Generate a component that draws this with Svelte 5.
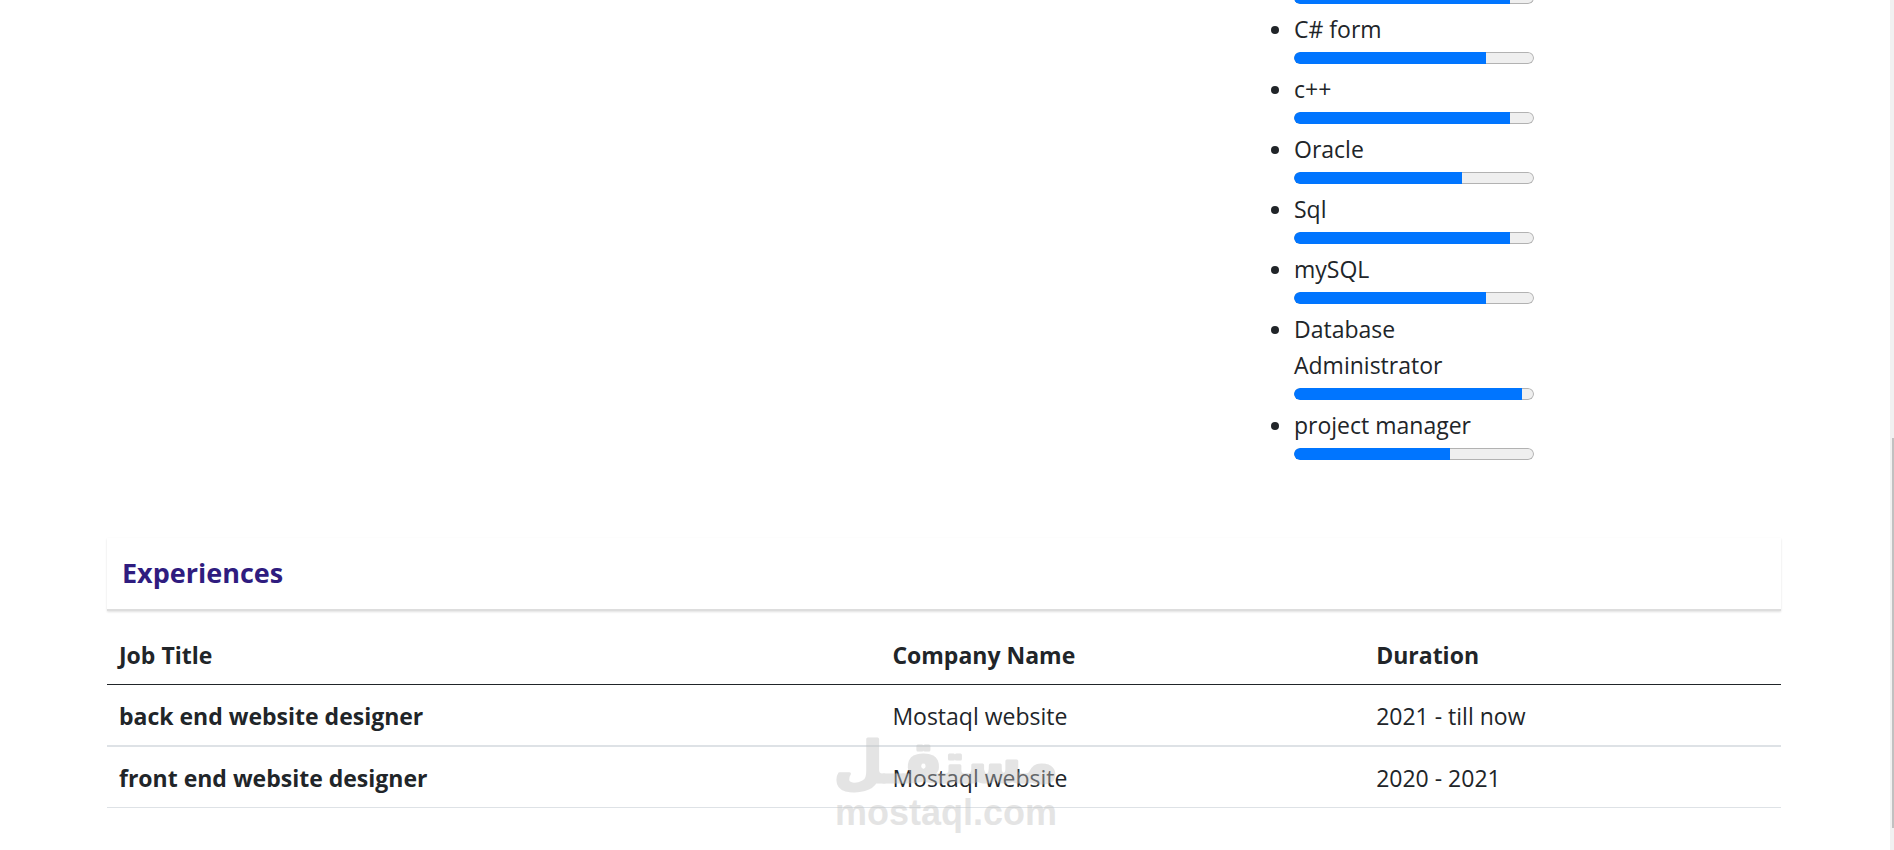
<script>
  // the first entry is scrolled almost out of view, only its bar is left
  const skills = [
    { name: '', value: 90 },
    { name: 'C# form', value: 80 },
    { name: 'c++', value: 90 },
    { name: 'Oracle', value: 70 },
    { name: 'Sql', value: 90 },
    { name: 'mySQL', value: 80 },
    { name: 'Database Administrator', value: 95 },
    { name: 'project manager', value: 65 }
  ];

  const experiences = [
    { title: 'back end website designer', company: 'Mostaql website', duration: '2021 - till now' },
    { title: 'front end website designer', company: 'Mostaql website', duration: '2020 - 2021' }
  ];
</script>

<div class="page">
  <main class="content">
    <ul class="skills">
      {#each skills as skill, i}
        <li class:cut={!skill.name}>
          {#if skill.name}
            <label for={`skill-${i}`}>{skill.name}</label>
          {/if}
          <progress id={`skill-${i}`} value={skill.value} max="100"></progress>
        </li>
      {/each}
    </ul>

    <section>
      <h2 class="section-title">Experiences</h2>
      <table>
        <thead>
          <tr>
            <th scope="col" class="col-title">Job Title</th>
            <th scope="col" class="col-company">Company Name</th>
            <th scope="col">Duration</th>
          </tr>
        </thead>
        <tbody>
          {#each experiences as job}
            <tr>
              <th scope="row">{job.title}</th>
              <td>{job.company}</td>
              <td>{job.duration}</td>
            </tr>
          {/each}
        </tbody>
      </table>
    </section>
  </main>

  <div class="scrollbar"><div class="thumb"></div></div>

  <svg class="watermark" width="240" height="116" viewBox="0 0 240 116">
    <text class="mark-ar" x="120" y="58" text-anchor="middle">مستقـل</text>
    <text class="mark-en" x="120" y="101" text-anchor="middle">mostaql.com</text>
  </svg>
</div>

<style>
  :global(body) {
    background: #fff;
    overflow: hidden;
  }
  .page {
    position: relative;
    display: flex;
    height: 100vh;
    overflow: hidden;
    color: #212529;
    font-family: 'Open Sans', 'Noto Sans', sans-serif;
    font-size: 23px;
    line-height: 36px;
  }
  .content {
    flex: 1;
    padding: 0 109px 0 107px;
  }
  .skills {
    width: 240px;
    margin: -8px 247px 78px auto;
    padding: 0;
  }
  .skills .cut {
    list-style: none;
  }
  label {
    display: block;
    padding-top: 2px;
  }
  progress {
    display: block;
    width: 240px;
    height: 12px;
    margin: 5px 0;
    border: none;
    border-radius: 6px;
    background: #efefef;
    overflow: hidden;
    appearance: none;
  }
  progress::-webkit-progress-bar {
    border-radius: 6px;
    background: #efefef;
    box-shadow: inset 0 0 0 1px #b2b2b2;
  }
  progress::-webkit-progress-value {
    border-radius: 6px 0 0 6px;
    background: #0075ff;
  }
  progress::-moz-progress-bar {
    background: #0075ff;
  }
  .cut progress {
    margin-top: 0;
  }
  .section-title {
    margin: 0 0 13px;
    padding: 14px 15px 16px;
    border-bottom: 2px solid #ddd;
    box-shadow: 0 1px 2px rgba(0, 0, 0, 0.12);
    color: #2f1c7f;
    font-size: 27px;
    font-weight: 700;
    line-height: 41px;
  }
  table {
    width: 100%;
    table-layout: fixed;
    border-collapse: separate;
    border-spacing: 0;
    text-align: left;
  }
  th,
  td {
    padding: 13px 12px 11px;
    border-bottom: 2px solid #dee2e6;
  }
  th {
    font-weight: 700;
  }
  thead th {
    border-bottom: 1px solid #212529;
  }
  tbody tr:last-child > * {
    border-bottom-width: 1px;
  }
  .col-title {
    box-sizing: border-box;
    width: 46.2%;
  }
  .col-company {
    box-sizing: border-box;
    width: 28.9%;
  }
  .scrollbar {
    box-sizing: border-box;
    width: 4px;
    padding-top: 438px;
    background: #f1f1f1;
  }
  .thumb {
    height: 390px;
    margin-left: 2px;
    background: #c1c1c1;
  }
  .watermark {
    position: absolute;
    left: 826px;
    bottom: 10px;
    fill: #c1c1c1;
    stroke: #c1c1c1;
    stroke-linejoin: round;
    opacity: 0.42;
    pointer-events: none;
  }
  .mark-ar {
    font: bold 56px 'DejaVu Sans', sans-serif;
    stroke-width: 3px;
  }
  .mark-en {
    font: bold 36px 'Liberation Sans', sans-serif;
    stroke: none;
  }
</style>
